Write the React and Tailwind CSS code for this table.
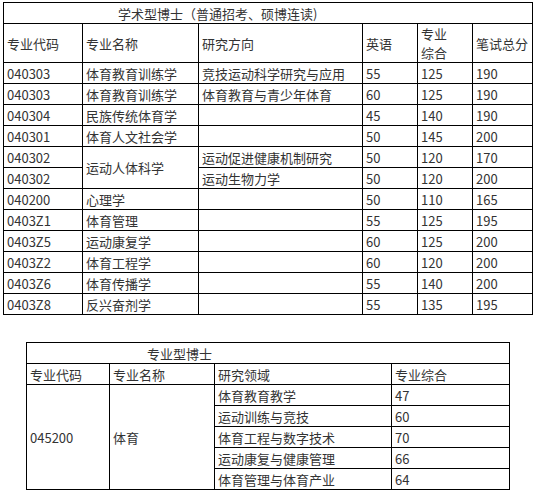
import React from "react";

const academicRows = [
  ["040303", "体育教育训练学", "竞技运动科学研究与应用", "55", "125", "190"],
  ["040303", "体育教育训练学", "体育教育与青少年体育", "60", "125", "190"],
  ["040304", "民族传统体育学", "", "45", "140", "190"],
  ["040301", "体育人文社会学", "", "50", "145", "200"],
  ["040302", "运动人体科学", "运动促进健康机制研究", "50", "120", "170"],
  ["040302", null, "运动生物力学", "50", "120", "200"],
  ["040200", "心理学", "", "50", "110", "165"],
  ["0403Z1", "体育管理", "", "55", "125", "195"],
  ["0403Z5", "运动康复学", "", "60", "125", "200"],
  ["0403Z2", "体育工程学", "", "60", "120", "200"],
  ["0403Z6", "体育传播学", "", "55", "140", "200"],
  ["0403Z8", "反兴奋剂学", "", "55", "135", "195"],
];

const proFields = [
  ["体育教育教学", "47"],
  ["运动训练与竞技", "60"],
  ["体育工程与数字技术", "70"],
  ["运动康复与健康管理", "66"],
  ["体育管理与体育产业", "64"],
];

const cell = "border border-black px-[3px] py-0 text-left font-normal align-middle whitespace-nowrap";

export default function App() {
  return (
    <div
      className="w-[535px] h-[493px] bg-white text-[#333] text-[13px] leading-[17px] overflow-hidden"
      style={{ fontFamily: '"Noto Sans CJK SC", "Noto Sans", sans-serif' }}
    >
      <table className="ml-[3px] mt-[2px] w-[530px] border-collapse table-fixed">
        <colgroup>
          <col className="w-[79px]" />
          <col className="w-[116px]" />
          <col className="w-[164px]" />
          <col className="w-[55px]" />
          <col className="w-[55px]" />
          <col className="w-[60px]" />
        </colgroup>
        <tbody>
          <tr className="h-[21px]">
            <td colSpan={6} className={`${cell} pl-[114px]`}>
              学术型博士（普通招考、硕博连读)
            </td>
          </tr>
          <tr className="h-[39px]">
            <td className={cell}>专业代码</td>
            <td className={cell}>专业名称</td>
            <td className={cell}>研究方向</td>
            <td className={cell}>英语</td>
            <td className={`${cell} leading-[19px]`}>
              专业
              <br />
              综合
            </td>
            <td className={cell}>笔试总分</td>
          </tr>
          {academicRows.map((row, i) => (
            <tr key={i} className="h-[21px]">
              <td className={cell}>{row[0]}</td>
              {row[1] !== null && (
                <td className={cell} rowSpan={i === 4 ? 2 : 1}>
                  {row[1]}
                </td>
              )}
              <td className={cell}>{row[2]}</td>
              <td className={cell}>{row[3]}</td>
              <td className={cell}>{row[4]}</td>
              <td className={cell}>{row[5]}</td>
            </tr>
          ))}
        </tbody>
      </table>

      <table className="ml-[26px] mt-[27px] w-[484px] border-collapse table-fixed">
        <colgroup>
          <col className="w-[83px]" />
          <col className="w-[105px]" />
          <col className="w-[177px]" />
          <col className="w-[118px]" />
        </colgroup>
        <tbody>
          <tr className="h-[21px]">
            <td colSpan={4} className={`${cell} pl-[120px]`}>
              专业型博士
            </td>
          </tr>
          <tr className="h-[21px]">
            <td className={cell}>专业代码</td>
            <td className={cell}>专业名称</td>
            <td className={cell}>研究领域</td>
            <td className={cell}>专业综合</td>
          </tr>
          {proFields.map((f, i) => (
            <tr key={i} className="h-[21px]">
              {i === 0 && (
                <>
                  <td className={cell} rowSpan={5}>045200</td>
                  <td className={cell} rowSpan={5}>体育</td>
                </>
              )}
              <td className={cell}>{f[0]}</td>
              <td className={cell}>{f[1]}</td>
            </tr>
          ))}
        </tbody>
      </table>
    </div>
  );
}
